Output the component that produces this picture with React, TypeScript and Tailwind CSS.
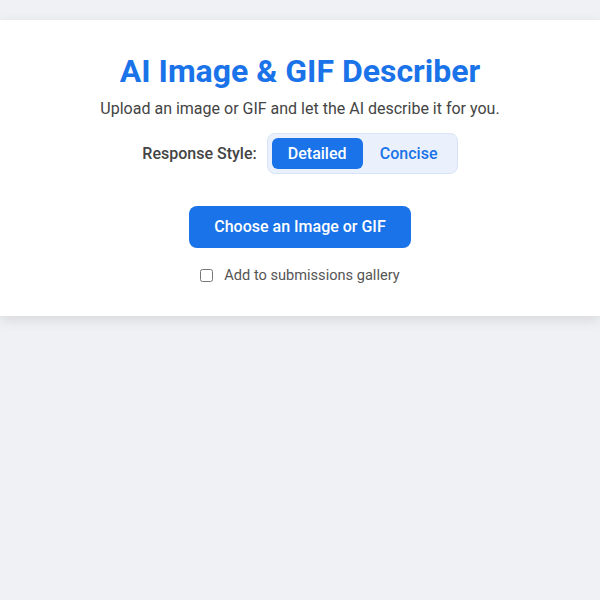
import React, { useState } from "react";

export default function App() {
  const [style, setStyle] = useState<"detailed" | "concise">("detailed");
  return (
    <div className="min-h-[600px] bg-[#f0f1f5] pt-5" style={{ fontFamily: "Roboto, 'Liberation Sans', sans-serif" }}>
      <div className="bg-white shadow-[0_4px_12px_rgba(0,0,0,0.1)] pt-[32px] pb-[30px] flex flex-col items-center">
        <h1 className="text-[32px] leading-[38px] font-bold text-[#1a73e8]">AI Image &amp; GIF Describer</h1>
        <p className="mt-[7px] text-[16px] leading-[24px] text-[#444]">Upload an image or GIF and let the AI describe it for you.</p>
        <div className="mt-[12px] flex items-center gap-[10px]">
          <span className="text-[16px] font-medium text-[#444]">Response Style:</span>
          <div className="flex items-center gap-[2px] p-[4px] rounded-[8px] border border-[#d6e4f7] bg-[#eaf1fc]">
            <button
              onClick={() => setStyle("detailed")}
              className={`h-[31px] w-[91px] rounded-[6px] text-[16px] font-medium ${style === "detailed" ? "bg-[#1a73e8] text-white" : "text-[#1a73e8]"}`}
            >
              Detailed
            </button>
            <button
              onClick={() => setStyle("concise")}
              className={`h-[31px] w-[88px] rounded-[6px] text-[16px] font-medium ${style === "concise" ? "bg-[#1a73e8] text-white" : "text-[#1a73e8]"}`}
            >
              Concise
            </button>
          </div>
        </div>
        <button className="mt-[32px] h-[42px] w-[222px] rounded-[8px] bg-[#1a73e8] text-white text-[16px] font-medium">
          Choose an Image or GIF
        </button>
        <label className="mt-[16px] flex items-center gap-[11px] text-[14.6px] leading-[22px] text-[#555]">
          <input type="checkbox" className="w-[13px] h-[13px]" />
          Add to submissions gallery
        </label>
      </div>
    </div>
  );
}
